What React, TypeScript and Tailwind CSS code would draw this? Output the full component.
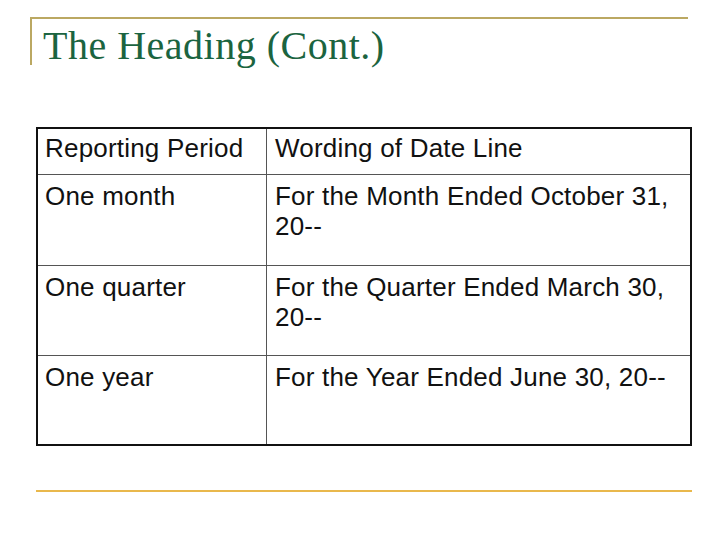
import React from "react";

const rows = [
  { a: "One month", b: "For the Month Ended October 31, 20--", h: "h-[91px]" },
  { a: "One quarter", b: "For the Quarter Ended March 30, 20--", h: "h-[90px]" },
  { a: "One year", b: "For the Year Ended June 30, 20--", h: "h-[88px]" },
];

export default function App() {
  return (
    <div className="w-[728px] h-[546px] bg-white overflow-hidden flex flex-col">
      <div className="ml-[30px] mt-[17px] w-[658px] h-[48px] border-t-2 border-l-2 border-[#bba862] pl-[11px] pt-[3px]">
        <div
          className="text-[40px] leading-[48px] tracking-[0.5px] text-[#1b6440] whitespace-nowrap"
          style={{ fontFamily: '"Liberation Serif", "Times New Roman", serif' }}
        >
          The Heading (Cont.)
        </div>
      </div>

      <div
        className="ml-[36px] mt-[62px] w-[656px] border-2 border-[#111] text-[26px] leading-[30px] tracking-[0.2px] text-[#111]"
        style={{ fontFamily: '"Liberation Sans", Arial, sans-serif' }}
      >
        <div className="grid grid-cols-[229px_1fr] h-[46px] border-b border-[#555]">
          <div className="border-r border-[#555] pl-[7px] pt-[4px] whitespace-nowrap">Reporting Period</div>
          <div className="pl-[8px] pt-[4px] whitespace-nowrap">Wording of Date Line</div>
        </div>
        {rows.map((r, i) => (
          <div
            key={r.a}
            className={`grid grid-cols-[229px_1fr] ${r.h} ${i < rows.length - 1 ? "border-b border-[#555]" : ""}`}
          >
            <div className="border-r border-[#555] pl-[7px] pt-[6px]">{r.a}</div>
            <div className="pl-[8px] pr-[8px] pt-[6px]">{r.b}</div>
          </div>
        ))}
      </div>

      <div className="ml-[36px] mt-[44px] w-[656px] h-[2px] bg-[#e9b84c]" />
    </div>
  );
}
